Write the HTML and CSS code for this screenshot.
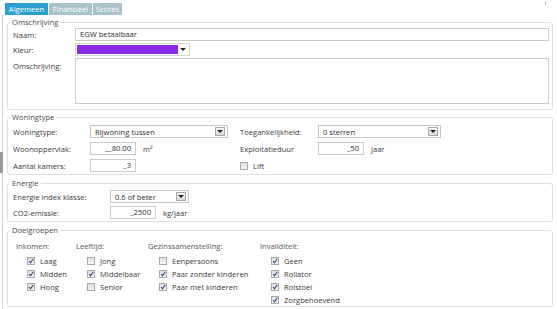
FILE: index.html
```html
<!DOCTYPE html>
<html lang="nl">
<head>
	<meta charset="utf-8">
	<title>Doelgroep</title>
	<link rel="stylesheet" href="styles.css">
</head>
<body>
	<div class="tabs">
		<span class="tab active">Algemeen</span>
		<span class="tab">Financieel</span>
		<span class="tab scores">Scores</span>
		<span class="corner"></span>
	</div>

	<div class="frame">
		<div class="rail"><span class="grip"></span></div>

		<div class="panel">
			<fieldset class="group g-desc">
				<legend>Omschrijving</legend>
				<div class="form desc-form">
					<label>Naam:</label>
					<div class="field">EGW betaalbaar</div>
					<label>Kleur:</label>
					<div class="color-pick"><span class="swatch"></span><span class="caret"><i class="tri"></i></span></div>
					<label class="top">Omschrijving:</label>
					<div class="field area"></div>
				</div>
			</fieldset>

			<fieldset class="group g-type">
				<legend>Woningtype</legend>
				<div class="form type-form">
					<label>Woningtype:</label>
					<div class="select w-type"><span class="val">Rijwoning tussen</span><span class="arrow"><i class="tri"></i></span></div>
					<label>Toegankelijkheid:</label>
					<div class="select w-access"><span class="val">0 sterren</span><span class="arrow"><i class="tri"></i></span></div>

					<label>Woonoppervlak:</label>
					<div class="with-unit"><div class="field num">__80.00</div><span>m²</span></div>
					<label>Exploitatieduur</label>
					<div class="with-unit"><div class="field num">_50</div><span>jaar</span></div>

					<label>Aantal kamers:</label>
					<div class="field num">_3</div>
					<div class="check span2"><span class="cb"></span>Lift</div>
				</div>
			</fieldset>

			<fieldset class="group g-energy">
				<legend>Energie</legend>
				<div class="form energy-form">
					<label>Energie index klasse:</label>
					<div class="select w-index"><span class="val">0.6 of beter</span><span class="arrow"><i class="tri"></i></span></div>
					<label>CO2-emissie:</label>
					<div class="with-unit"><div class="field num">_2500</div><span>kg/jaar</span></div>
				</div>
			</fieldset>

			<fieldset class="group g-target">
				<legend>Doelgroepen</legend>
				<div class="targets">
					<div class="col">
						<div class="col-head">Inkomen:</div>
						<div class="check"><span class="cb on"></span>Laag</div>
						<div class="check"><span class="cb on"></span>Midden</div>
						<div class="check"><span class="cb on"></span>Hoog</div>
					</div>
					<div class="col">
						<div class="col-head">Leeftijd:</div>
						<div class="check"><span class="cb"></span>Jong</div>
						<div class="check"><span class="cb on"></span>Middelbaar</div>
						<div class="check"><span class="cb"></span>Senior</div>
					</div>
					<div class="col">
						<div class="col-head">Gezinssamenstelling:</div>
						<div class="check"><span class="cb"></span>Eenpersoons</div>
						<div class="check"><span class="cb on"></span>Paar zonder kinderen</div>
						<div class="check"><span class="cb on"></span>Paar met kinderen</div>
					</div>
					<div class="col">
						<div class="col-head">Invaliditeit:</div>
						<div class="check"><span class="cb on"></span>Geen</div>
						<div class="check"><span class="cb on"></span>Rollator</div>
						<div class="check"><span class="cb on"></span>Rolstoel</div>
						<div class="check"><span class="cb on"></span>Zorgbehoevend</div>
					</div>
				</div>
			</fieldset>
		</div>
	</div>
</body>
</html>
```

FILE: styles.css
```css
* {
	box-sizing: border-box;
}

body {
	margin: 0;
	width: 557px;
	height: 309px;
	overflow: hidden;
	font-family: 'Open Sans', sans-serif;
	font-size: 7.6px;
	line-height: 10px;
	color: #3a3a3a;
	background: white;
}

/* tab strip */

.tabs {
	display: flex;
	gap: 1px;
	height: 15px;
	padding: 3px 0 0 5px;
}

.tab {
	width: 43px;
	height: 12px;
	line-height: 12px;
	text-align: center;
	color: white;
	background: #a9c1ca;
}

.tab.active {
	background: #2c9fd1;
}

.tab.scores {
	width: 29px;
}

.corner {
	width: 1px;
	height: 4px;
	margin: -2px 11px 0 auto;
	background: #b8b8b8;
}

/* frame */

.frame {
	display: flex;
	height: 294px;
}

.rail {
	box-sizing: content-box;
	width: 2px;
	border-right: 1px solid #d2d2d2;
	display: flex;
	align-items: center;
}

.grip {
	flex: none;
	width: 3px;
	height: 21px;
	background: #9c9c9c;
}

.panel {
	flex: 1;
	display: flex;
	flex-direction: column;
	gap: 3px;
	padding: 2px 4px 0 4px;
}

/* group boxes */

.group {
	margin: 0;
	min-width: 0;
	padding: 0 3px 3px 5px;
	border: 1px solid #dfdfdf;
	border-radius: 3px;
}

.group legend {
	padding: 0 2px;
	margin-left: -3px;
	color: #4a4a4a;
}

.g-desc {
	padding-top: 1px;
	padding-bottom: 5px;
	margin-bottom: -1px;
}

.g-type {
	padding-top: 3px;
	padding-bottom: 2px;
}

.g-energy {
	padding-top: 2px;
	padding-bottom: 2px;
}

.g-target {
	padding-top: 6px;
	padding-bottom: 0;
}

/* form grids */

.form {
	display: grid;
	align-items: center;
}

.desc-form {
	grid-template-columns: 62px 1fr;
	row-gap: 2px;
}

.type-form {
	grid-template-columns: 77px 150px 78px 1fr;
	row-gap: 4px;
}

.energy-form {
	grid-template-columns: 97px 1fr;
	row-gap: 3px;
}

label.top {
	align-self: start;
	margin-top: 3px;
}

/* controls */

.field {
	height: 13px;
	line-height: 11px;
	padding: 0 4px;
	border: 1px solid #cbcbcb;
	background: white;
	color: #2e2e2e;
	white-space: nowrap;
}

.field.area {
	height: 46px;
}

.field.num {
	width: 46px;
	text-align: right;
}

.with-unit {
	display: flex;
	align-items: center;
	gap: 7px;
}

.color-pick {
	display: flex;
	width: 115px;
	height: 13px;
	padding: 1px;
	border: 1px solid #d4d4d4;
}

.swatch {
	width: 101px;
	background: #8a2be2;
}

.caret {
	flex: 1;
	display: flex;
	align-items: center;
	justify-content: center;
}

.tri {
	width: 0;
	height: 0;
	border-left: 3px solid transparent;
	border-right: 3px solid transparent;
	border-top: 3px solid #222;
}

.select {
	display: flex;
	align-items: center;
	height: 13px;
	padding-left: 4px;
	border: 1px solid #c6c6c6;
	background: white;
	color: #2e2e2e;
}

.select .val {
	flex: 1;
	white-space: nowrap;
}

.select .arrow {
	display: flex;
	align-items: center;
	justify-content: center;
	width: 10px;
	height: 9px;
	margin-right: 2px;
	border: 1px solid #a8a8a8;
	background: linear-gradient(#f6f6f6, #d9d9d9);
}

.w-type {
	width: 138px;
}

.w-access {
	width: 123px;
}

.w-index {
	width: 79px;
}

/* checkboxes */

.check {
	display: flex;
	align-items: center;
	gap: 5px;
	height: 13px;
	white-space: nowrap;
}

.span2 {
	grid-column: span 2;
}

.cb {
	flex: none;
	width: 8px;
	height: 8px;
	border: 1px solid #a9a9a9;
	background: linear-gradient(#dedede, #f7f7f7);
}

.cb.on {
	background: url("data:image/svg+xml,%3csvg xmlns='http://www.w3.org/2000/svg' viewBox='0 0 6 6'%3e%3cpath d='M1 3.2 L2.5 4.8 L5.2 1' fill='none' stroke='%23334f86' stroke-width='1.2'/%3e%3c/svg%3e") center / 6px 6px no-repeat, linear-gradient(#dedede, #f7f7f7);
}

.targets {
	display: grid;
	grid-template-columns: 60px 72px 112px 1fr;
	padding-left: 3px;
}

.col-head {
	height: 10px;
	margin-bottom: 3px;
	color: #555;
}

.col .check {
	padding-left: 11px;
}
```
